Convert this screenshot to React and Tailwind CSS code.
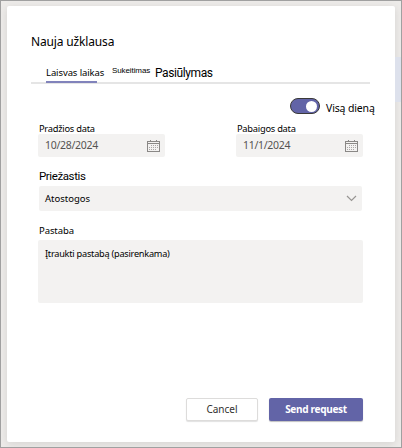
import React, { useState } from "react";

const CalendarIcon = () => (
  <svg width="13" height="12" viewBox="0 0 13 12" fill="none" stroke="#8a8886">
    <rect x="0.5" y="1.5" width="12" height="10" />
    <path d="M0.5 3.5h12M3.5 0v2M9.5 0v2" />
    <path d="M4 5.5h7M2 7.5h9M2 9.5h7" strokeDasharray="1 1" strokeOpacity="0.7" />
  </svg>
);

const DateField = ({ label, value }) => (
  <div className="w-[127px]">
    <label className="block h-[11px] pl-px text-[9.3px] leading-[13px] tracking-[-0.25px]">{label}</label>
    <div className="flex items-center justify-between h-[23px] mt-px pl-[7px] pr-[5px] rounded-xs bg-[#f3f2f1] text-[#555352]">
      <span className="text-[10.5px] tracking-[-0.3px]">{value}</span>
      <CalendarIcon />
    </div>
  </div>
);

const App = () => {
  const [allDay, setAllDay] = useState(true);

  return (
    <div className="w-[402px] h-[448px] border border-[#a0a0a0] bg-[#edebe9] pt-[5px] pl-[6px] overflow-hidden font-['Noto_Sans','Open_Sans',sans-serif] text-black whitespace-nowrap">
      <div className="flex">
        <div className="w-[388px] h-[436px] shrink-0 rounded-xs bg-white shadow-[0_2px_8px_rgba(0,0,0,0.1)] px-[31px]">
          <h1 className="ml-[-7px] pt-[27px] h-[45px] text-[12px] leading-[18px] tracking-[-0.15px]">Nauja užklausa</h1>

          <div className="flex ml-[-7px] h-[33px] w-[339px] border-b-2 border-[#e5e5e5]">
            <span className="ml-[15px] w-[51px] h-[32px] pt-[15px] border-b-2 border-[#8183bb] text-[9.5px] leading-[14px] tracking-[-0.1px]">
              Laisvas laikas
            </span>
            <span className="ml-[15px] pt-[13px] w-[43px] font-['Liberation_Sans',sans-serif] text-[8px] leading-[14px] tracking-[-0.1px]">
              Sukeitimas
            </span>
            <span className="pt-[14px] font-[Roboto,sans-serif] text-[12px] leading-[16px] tracking-[-0.4px]">
              Pasiūlymas
            </span>
          </div>

          <div className="flex pl-[252px] pt-[14px] h-[38px]">
            <button
              onClick={() => setAllDay(!allDay)}
              className={`flex items-center shrink-0 w-[30px] h-[16px] px-[2px] rounded-full border border-[#3b3a39] bg-[#6264a7] ${
                allDay ? "justify-end" : "justify-start"
              }`}
            >
              <span className="size-[11px] rounded-full bg-white" />
            </button>
            <span className="ml-[6px] mt-[2px] text-[10.5px] leading-[16px] tracking-[-0.15px]">Visą dieną</span>
          </div>

          <div className="flex gap-[71px]">
            <DateField label="Pradžios data" value="10/28/2024" />
            <DateField label="Pabaigos data" value="11/1/2024" />
          </div>

          <label className="block ml-px mt-[11px] h-[18px] text-[11.5px] leading-[17px] tracking-[-0.4px] font-[Roboto,sans-serif]">
            Priežastis
          </label>
          <div className="flex items-center justify-between ml-px w-[323px] h-[25px] pl-[6px] pr-[5px] rounded-xs bg-[#f3f2f1]">
            <span className="pt-[2px] text-[9.5px]">Atostogos</span>
            <svg width="11" height="7" viewBox="0 0 11 7" fill="none" stroke="#979593" strokeWidth="1.2">
              <path d="M1 1l4.5 4.5L10 1" />
            </svg>
          </div>

          <label className="block ml-px mt-[13px] h-[16px] text-[9.5px] leading-[14px] tracking-[-0.1px]">Pastaba</label>
          <div className="w-[325px] h-[63px] pl-[7px] pt-[7px] rounded-xs bg-[#f3f2f1] text-[9.2px] leading-[14px] tracking-[-0.25px]">
            Įtraukti pastabą (pasirenkama)
          </div>

          <div className="flex gap-[11px] ml-[148px] mt-[95px] text-[10px]">
            <button className="w-[72px] h-[23px] rounded-[2px] border border-[#dddcdb] bg-white text-[#323130] shadow-[0_1px_1px_rgba(0,0,0,0.12)]">
              Cancel
            </button>
            <button className="w-[94px] h-[23px] rounded-[2px] bg-[#6264a7] font-bold text-white tracking-[-0.3px] shadow-[0_1px_1px_rgba(0,0,0,0.25)]">
              Send request
            </button>
          </div>
        </div>
        <div className="w-[6px] h-[45px] mt-[51px] bg-[#dde1ec]" />
      </div>
    </div>
  );
};

export default App;
